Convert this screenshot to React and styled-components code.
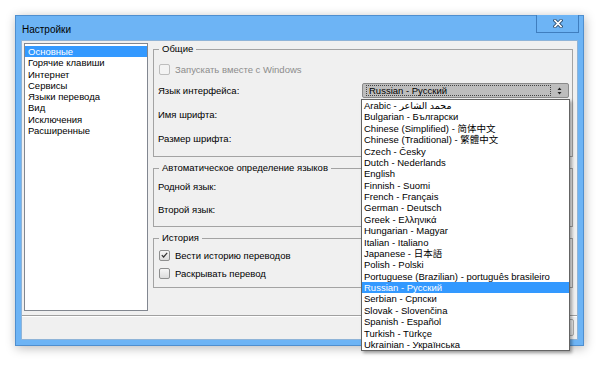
import styled, { createGlobalStyle } from 'styled-components';

const GlobalStyle = createGlobalStyle`
  html, body {
    margin: 0;
    background: #ffffff;
  }
  body {
    font-family: "Liberation Sans", "Noto Sans CJK SC", "DejaVu Sans", sans-serif;
    font-size: 9.5px;
    color: #000;
  }
`;

const languages = [
  'Arabic - محمد الشاعر',
  'Bulgarian - Български',
  'Chinese (Simplified) - 简体中文',
  'Chinese (Traditional) - 繁體中文',
  'Czech - Česky',
  'Dutch - Nederlands',
  'English',
  'Finnish - Suomi',
  'French - Français',
  'German - Deutsch',
  'Greek - Ελληνικά',
  'Hungarian - Magyar',
  'Italian - Italiano',
  'Japanese - 日本語',
  'Polish - Polski',
  'Portuguese (Brazilian) - português brasileiro',
  'Russian - Русский',
  'Serbian - Српски',
  'Slovak - Slovenčina',
  'Spanish - Español',
  'Turkish - Türkçe',
  'Ukrainian - Українська',
];

const pages = [
  'Основные',
  'Горячие клавиши',
  'Интернет',
  'Сервисы',
  'Языки перевода',
  'Вид',
  'Исключения',
  'Расширенные',
];

const Page = styled.div`
  width: 600px;
  height: 366px;
  padding: 15px 0 0 15px;
  box-sizing: border-box;
`;

const Window = styled.div`
  width: 569px;
  height: 331px;
  box-sizing: border-box;
  background: #6db4f5;
  border: 1px solid #4f8fcf;
  box-shadow: 1px 2px 10px rgba(0, 0, 0, 0.28);
  display: flex;
  flex-direction: column;
`;

const TitleBar = styled.div`
  height: 24px;
  flex: none;
  display: flex;
  align-items: center;
  padding-left: 6px;
`;

const TitleText = styled.span`
  font-size: 10px;
  flex: 1;
  padding-top: 2px;
`;

const CloseButton = styled.div`
  align-self: flex-start;
  width: 41px;
  height: 17px;
  margin: -1px 4px 0 0;
  border: 1px solid #3f7ebf;
  border-top: none;
  background: #6db4f5;
  display: flex;
  align-items: center;
  justify-content: center;
`;

const Client = styled.div`
  flex: 1;
  margin: 0 5px 5px 5px;
  background: #f0f0f0;
  border: 1px solid #8fb4d8;
  display: flex;
  flex-direction: column;
`;

const Body = styled.div`
  display: flex;
  gap: 5px;
  padding: 2px 4px 4px 2px;
`;

const NavList = styled.ul`
  width: 124px;
  height: 268px;
  box-sizing: border-box;
  margin: 0;
  padding: 2px 0 0;
  list-style: none;
  background: #fff;
  border: 1px solid #828790;
  flex: none;
`;

const NavItem = styled.li`
  height: 11.3px;
  line-height: 11.3px;
  padding-left: 3px;
  white-space: nowrap;
  background: ${({ $active }) => ($active ? '#3399ff' : 'transparent')};
  color: ${({ $active }) => ($active ? '#fff' : '#000')};
`;

const Panel = styled.div`
  flex: 1;
  display: flex;
  flex-direction: column;
  gap: 5px;
`;

const Group = styled.fieldset`
  margin: 0;
  padding: ${({ $pt }) => $pt}px 3px ${({ $pb }) => $pb}px 4px;
  border: 1px solid #a3a3a3;
  min-width: 0;
`;

const Legend = styled.legend`
  padding: 0 3px;
  margin-left: 1px;
  line-height: 12px;
  height: 12px;
`;

const Row = styled.div`
  height: ${({ $h }) => $h}px;
  display: flex;
  align-items: center;
  position: relative;
`;

const Label = styled.span`
  color: ${({ $disabled }) => ($disabled ? '#8d8d8d' : '#000')};
  white-space: nowrap;
`;

const Box = styled.span`
  width: 11px;
  height: 11px;
  box-sizing: border-box;
  margin: 0 5px 0 1px;
  border: 1px solid ${({ $disabled }) => ($disabled ? '#bdbdbd' : '#8e8f8f')};
  border-radius: 2px;
  background: ${({ $disabled }) =>
    $disabled ? '#f3f3f3' : 'linear-gradient(#f6f6f6, #dcdcdc)'};
  display: flex;
  align-items: center;
  justify-content: center;
  flex: none;
`;

const Combo = styled.div`
  margin-left: auto;
  width: 207px;
  height: 15px;
  box-sizing: border-box;
  border: 1px solid #8a8a8a;
  border-radius: 2px;
  background: ${({ $open }) => ($open ? '#bdbdbd' : '#fff')};
  display: flex;
  align-items: stretch;
  position: relative;
  z-index: ${({ $open }) => ($open ? 5 : 1)};
`;

const ComboText = styled.div`
  flex: 1;
  margin: 1px 0 1px 3px;
  padding-left: 2px;
  border: 1px dotted #444;
  line-height: 10px;
  white-space: nowrap;
`;

const ComboArrows = styled.div`
  width: 17px;
  display: flex;
  align-items: center;
  justify-content: center;
`;

const Dropdown = styled.ul`
  position: absolute;
  top: calc(100% + 2px);
  left: -2px;
  width: 209px;
  margin: 0;
  padding: 0;
  list-style: none;
  box-sizing: border-box;
  background: #fff;
  border: 1px solid #646464;
  box-shadow: 2px 2px 3px rgba(0, 0, 0, 0.35);
`;

const DropItem = styled.li`
  height: 11.38px;
  line-height: 11.38px;
  padding-left: 2px;
  white-space: nowrap;
  overflow: hidden;
  background: ${({ $selected }) => ($selected ? '#3399ff' : 'transparent')};
  color: ${({ $selected }) => ($selected ? '#fff' : '#000')};
`;

const Footer = styled.div`
  flex: 1;
  border-top: 1px solid #a0a0a0;
  box-shadow: inset 0 1px 0 #fff;
  display: flex;
  align-items: center;
  justify-content: flex-end;
  gap: 5px;
  padding-right: 3px;
`;

const Button = styled.div`
  width: 72px;
  height: 17px;
  box-sizing: border-box;
  border: 1px solid #acacac;
  border-radius: 2px;
  background: linear-gradient(#f0f0f0, #e5e5e5);
`;

const Check = ({ checked, disabled, children }) => (
  <>
    <Box $disabled={disabled}>
      {checked && (
        <svg width="7" height="6" viewBox="0 0 7 6">
          <path d="M0.8 3.2 L2.6 5 L6.2 0.8" fill="none" stroke="#333" strokeWidth="1.2" />
        </svg>
      )}
    </Box>
    <Label $disabled={disabled}>{children}</Label>
  </>
);

export default function App() {
  return (
    <Page>
      <GlobalStyle />
      <Window>
        <TitleBar>
          <TitleText>Настройки</TitleText>
          <CloseButton>
            <svg width="10" height="9" viewBox="0 0 10 9">
              <path d="M2 1.5 L8 7.5 M8 1.5 L2 7.5" stroke="#2d4f73" strokeWidth="3.4" strokeLinecap="square" />
              <path d="M2 1.5 L8 7.5 M8 1.5 L2 7.5" stroke="#fff" strokeWidth="1.7" strokeLinecap="square" />
            </svg>
          </CloseButton>
        </TitleBar>
        <Client>
          <Body>
            <NavList>
              {pages.map((p, i) => (
                <NavItem key={p} $active={i === 0}>{p}</NavItem>
              ))}
            </NavList>
            <Panel>
              <Group $pt={3} $pb={6}>
                <Legend>Общие</Legend>
                <Row $h={22}>
                  <Check disabled>Запускать вместе с Windows</Check>
                </Row>
                <Row $h={21}>
                  <Label>Язык интерфейса:</Label>
                  <Combo $open>
                    <ComboText>Russian - Русский</ComboText>
                    <ComboArrows>
                      <svg width="5" height="8" viewBox="0 0 5 8">
                        <path d="M2.5 0.5 L4.5 3 L0.5 3 Z M0.5 5 L4.5 5 L2.5 7.5 Z" fill="#222" />
                      </svg>
                    </ComboArrows>
                    <Dropdown>
                      {languages.map((l) => (
                        <DropItem key={l} $selected={l.startsWith('Russian')}>{l}</DropItem>
                      ))}
                    </Dropdown>
                  </Combo>
                </Row>
                <Row $h={26}>
                  <Label>Имя шрифта:</Label>
                  <Combo>
                    <ComboText />
                  </Combo>
                </Row>
                <Row $h={23}>
                  <Label>Размер шрифта:</Label>
                  <Combo>
                    <ComboText />
                  </Combo>
                </Row>
              </Group>
              <Group $pt={1} $pb={5}>
                <Legend>Автоматическое определение языков</Legend>
                <Row $h={23}>
                  <Label>Родной язык:</Label>
                  <Combo>
                    <ComboText />
                  </Combo>
                </Row>
                <Row $h={23}>
                  <Label>Второй язык:</Label>
                  <Combo>
                    <ComboText />
                  </Combo>
                </Row>
              </Group>
              <Group $pt={2} $pb={5}>
                <Legend>История</Legend>
                <Row $h={18}>
                  <Check checked>Вести историю переводов</Check>
                </Row>
                <Row $h={18}>
                  <Check>Раскрывать перевод</Check>
                </Row>
              </Group>
            </Panel>
          </Body>
          <Footer>
            <Button />
            <Button />
          </Footer>
        </Client>
      </Window>
    </Page>
  );
}
